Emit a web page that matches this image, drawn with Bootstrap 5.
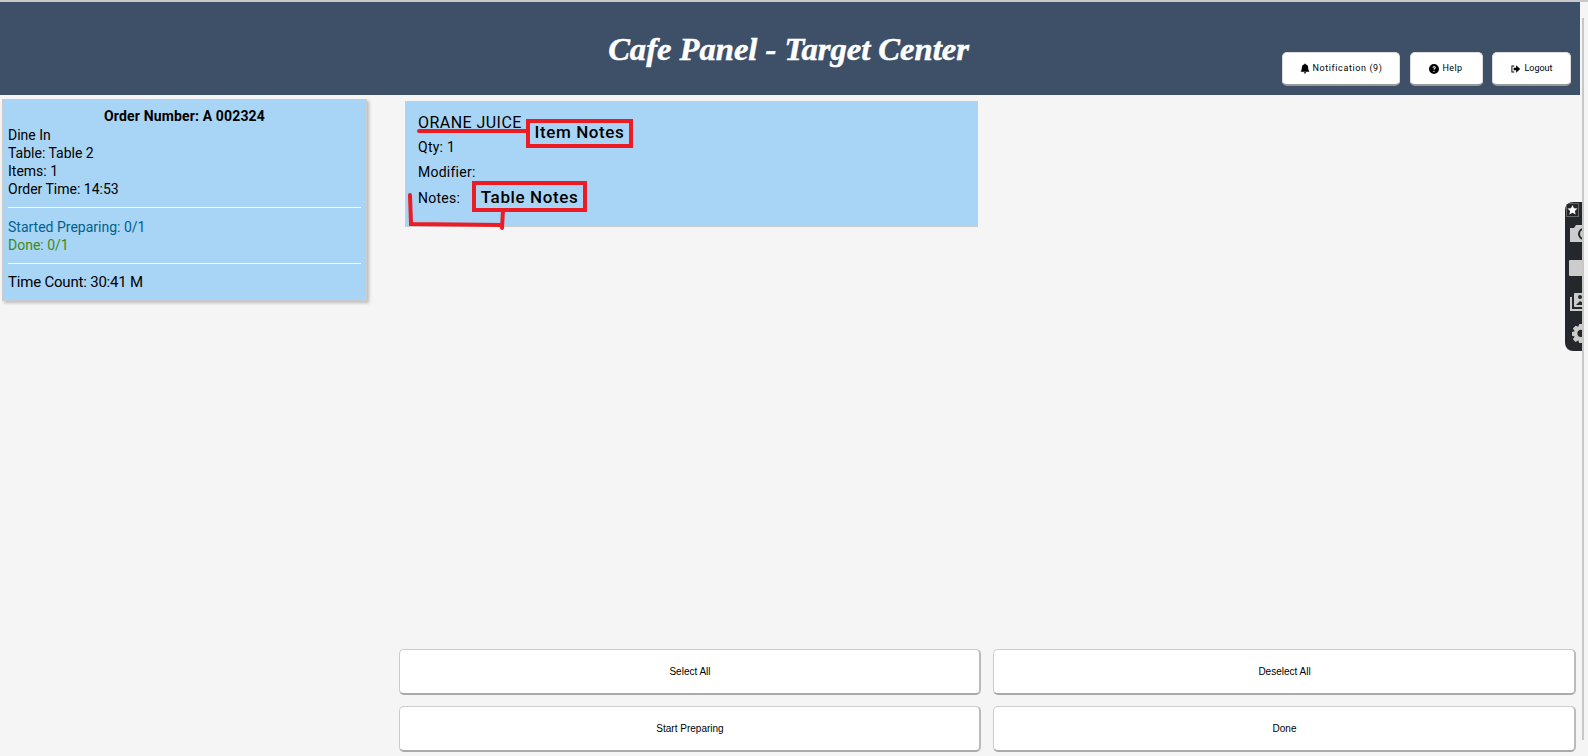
<!DOCTYPE html>
<html lang="en">
<head>
<meta charset="utf-8">
<title>Cafe Panel</title>
<link href="https://cdn.jsdelivr.net/npm/bootstrap@5.3.0/dist/css/bootstrap.min.css" rel="stylesheet">
<style>
html,body{height:756px;overflow:hidden}
body{background:#f5f5f5;font-family:Roboto,"Liberation Sans",sans-serif;color:#000;position:relative}
.page-frame{height:756px;width:1580px;padding-top:2px;display:flex;flex-direction:column}
.top-line{position:absolute;left:0;right:0;top:0;height:2px;background:#c9c9c9}
.side-stripe{position:absolute;left:1582px;top:18px;width:2px;height:722px;background:#c8c8c8}
.head-bar{height:93px;background:#3e5068;position:relative;flex:none}
.head-title{position:absolute;left:-3px;right:0;top:22px;margin:0;text-align:center;color:#fff;font:italic 700 32.600px/50px "Liberation Serif",serif;-webkit-text-stroke:.5px #fff}
.head-btns{position:absolute;right:9px;top:50px;gap:9.500px}
.head-btn{height:34px;background:#fff;border:1px solid #ddd;border-bottom:2px solid #999;border-radius:5px;font:9px/1 Roboto,sans-serif;color:#000;padding:0;display:flex;align-items:center;justify-content:center;gap:3px}
.w-note{width:118px;letter-spacing:.6px}.w-help{width:73px;letter-spacing:.4px}.w-out{width:79px}
.main-area{flex:1;display:flex;min-height:0;position:relative}
.left-pane{width:399px;flex:none;padding:4px 0 0 2px}
.order-box{width:365px;height:202px;background:#a8d5f5;border:1px solid #ccc;box-shadow:2px 2px 3px #bbb;padding:7px 5px 0 5px;font-size:14px;line-height:18px}
.order-num{font-weight:700;font-size:14px;letter-spacing:.15px;text-align:center;line-height:18px;margin-bottom:1px}
.order-rule{border:0;border-top:1px solid #fff;opacity:1;margin:9px 0 10px}
.c-start{color:#00618c}.c-done{color:#3f8a14}
.time-count{font-size:15px;letter-spacing:-.2px;line-height:18px;margin-top:-1px}
.right-pane{flex:1;display:flex;flex-direction:column;min-width:0}
.items-area{flex:1;padding:6px 0 0 6px;position:relative}
.item-box{width:573px;height:126px;background:#a8d5f5;border:1px solid #ccc;padding:11px 12px 0;font-size:14px;letter-spacing:.25px;position:relative}
.item-name{font-size:16px;letter-spacing:.45px;line-height:20px;margin-bottom:4px}
.item-line{line-height:20px;margin-bottom:5px}
.item-line-wide{margin-bottom:6px}
.mark-note{position:absolute;border:4px solid #ed1c24;font-weight:500;font-size:17px;letter-spacing:.6px;display:flex;align-items:center;justify-content:center;line-height:1}
.mark-item{left:120px;top:17px;width:107px;height:29px;padding-bottom:2px}
.mark-table{left:66px;top:79px;width:115px;height:31px;padding-top:2px}
.mark-lines{position:absolute;left:0;top:0;width:573px;height:126px;overflow:visible}
.act-grid{display:grid;grid-template-columns:582px 583px;column-gap:12px;row-gap:11px;padding:0 0 4px 0}
.act-btn{height:46px;background:#fff;border:1px solid #ccc;border-bottom:2px solid #aaa;border-right:2px solid #bbb;border-radius:5px;font:10px/1 "Liberation Sans",sans-serif;color:#000;padding:0 0 0 1px}
.tool-tab{position:absolute;left:1565px;top:202px;width:17px;height:149px;background:#24282d;border-radius:8px 0 0 8px;overflow:hidden}
.tool-tab svg{display:block;position:absolute}
.ico-star{left:1px;top:1px}.ico-cam{left:5px;top:21px}.ico-rect{left:4px;top:58px}.ico-pics{left:5px;top:91px}.ico-gear{left:7px;top:121px}
</style>
</head>
<body>
<div class="top-line"></div>
<div class="page-frame">
  <header class="head-bar">
    <h1 class="head-title">Cafe Panel - Target Center</h1>
    <div class="head-btns d-flex">
      <button class="btn head-btn w-note"><svg width="10" height="11" viewBox="0 0 16 16"><path fill="#000" d="M8 16a2 2 0 0 0 2-2H6a2 2 0 0 0 2 2zm.995-14.900a1 1 0 1 0-1.990 0A5 5 0 0 0 3 6c0 1.100-.5 6-2 7h14c-1.500-1-2-5.900-2-7a5 5 0 0 0-4.005-4.900z"/></svg>Notification (9)</button>
      <button class="btn head-btn w-help"><svg width="10" height="10" viewBox="0 0 16 16"><path fill="#000" d="M16 8A8 8 0 1 1 0 8a8 8 0 0 1 16 0zM5.500 6h1.700c.1-.7.5-1.100 1-1.100s.9.300.9.800c0 .4-.2.600-.7 1-.8.600-1.100 1.100-1.100 2v.3h1.600V8.800c0-.4.200-.6.700-1 .7-.6 1.200-1.100 1.200-2.100 0-1.400-1.100-2.300-2.600-2.300-1.600 0-2.600 1-2.700 2.600zM7 11v1.700h1.700V11H7z"/></svg>Help</button>
      <button class="btn head-btn w-out"><svg width="11" height="10" viewBox="0 0 16 16"><path fill="#000" d="M6 2.500H1.500v11H6V12H3V4h3V2.500zM9 2v4H5v4h4v4l6.500-6L9 2z"/></svg>Logout</button>
    </div>
  </header>
  <div class="main-area">
    <div class="left-pane">
      <div class="order-box">
        <div class="order-num">Order Number: A 002324</div>
        <div>Dine In</div>
        <div>Table: Table 2</div>
        <div>Items: 1</div>
        <div>Order Time: 14:53</div>
        <hr class="order-rule">
        <div class="c-start">Started Preparing: 0/1</div>
        <div class="c-done">Done: 0/1</div>
        <hr class="order-rule">
        <div class="time-count">Time Count: 30:41 M</div>
      </div>
    </div>
    <div class="right-pane">
      <div class="items-area">
        <div class="item-box">
          <div class="item-name">ORANE JUICE</div>
          <div class="item-line">Qty: 1</div>
          <div class="item-line item-line-wide">Modifier:</div>
          <div class="item-line">Notes:</div>
          <svg class="mark-lines" viewBox="0 0 573 126"><path fill="none" stroke="#ed1c24" stroke-width="4" stroke-linecap="round" d="M13 29H122M4 93l1 29 91 1M97 108l-1 18"/></svg>
          <div class="mark-note mark-item">Item Notes</div>
          <div class="mark-note mark-table">Table Notes</div>
        </div>
      </div>
      <div class="act-grid">
        <button class="btn act-btn">Select All</button>
        <button class="btn act-btn">Deselect All</button>
        <button class="btn act-btn">Start Preparing</button>
        <button class="btn act-btn">Done</button>
      </div>
    </div>
  </div>
</div>
<div class="side-stripe"></div>
<div class="tool-tab">
  <svg class="ico-star" width="13" height="14" viewBox="0 0 13 14"><rect x=".5" y=".5" width="12" height="13" fill="#24282d" stroke="#666"/><path fill="#fff" d="M6.500 2l1.500 3.200 3.500.4-2.600 2.400.7 3.500-3.100-1.800-3.100 1.800.7-3.500L1.500 5.600 5 5.200z"/></svg>
  <svg class="ico-cam" width="18" height="20" viewBox="0 0 18 20"><path fill="#ccc" d="M0 5h4l2-3h12v17H0z"/><circle cx="14" cy="11" r="5" fill="none" stroke="#24282d" stroke-width="2"/></svg>
  <svg class="ico-rect" width="19" height="16" viewBox="0 0 19 16"><rect width="19" height="16" rx="1" fill="#ccc"/></svg>
  <svg class="ico-pics" width="19" height="18" viewBox="0 0 19 18"><path fill="none" stroke="#ccc" stroke-width="2" d="M1 4v13h18"/><rect x="4" y="0" width="15" height="14" rx="1" fill="#ccc"/><circle cx="10" cy="4" r="2" fill="#24282d"/><path fill="#24282d" d="M6 12l4-4 3 2 6-3v5z"/></svg>
  <svg class="ico-gear" width="18" height="20" viewBox="0 0 20 20"><path fill="#ccc" d="M8 0h4l1 3 3-1 3 3-2 3 3 1v4l-3 1 2 3-3 3-3-2-1 3H8l-1-3-3 2-3-3 2-3-3-1V9l3-1-2-3 3-3 3 1z"/><circle cx="10" cy="10.500" r="4" fill="#24282d"/></svg>
</div>
<script src="https://cdn.jsdelivr.net/npm/bootstrap@5.3.0/dist/js/bootstrap.bundle.min.js"></script>
</body>
</html>
